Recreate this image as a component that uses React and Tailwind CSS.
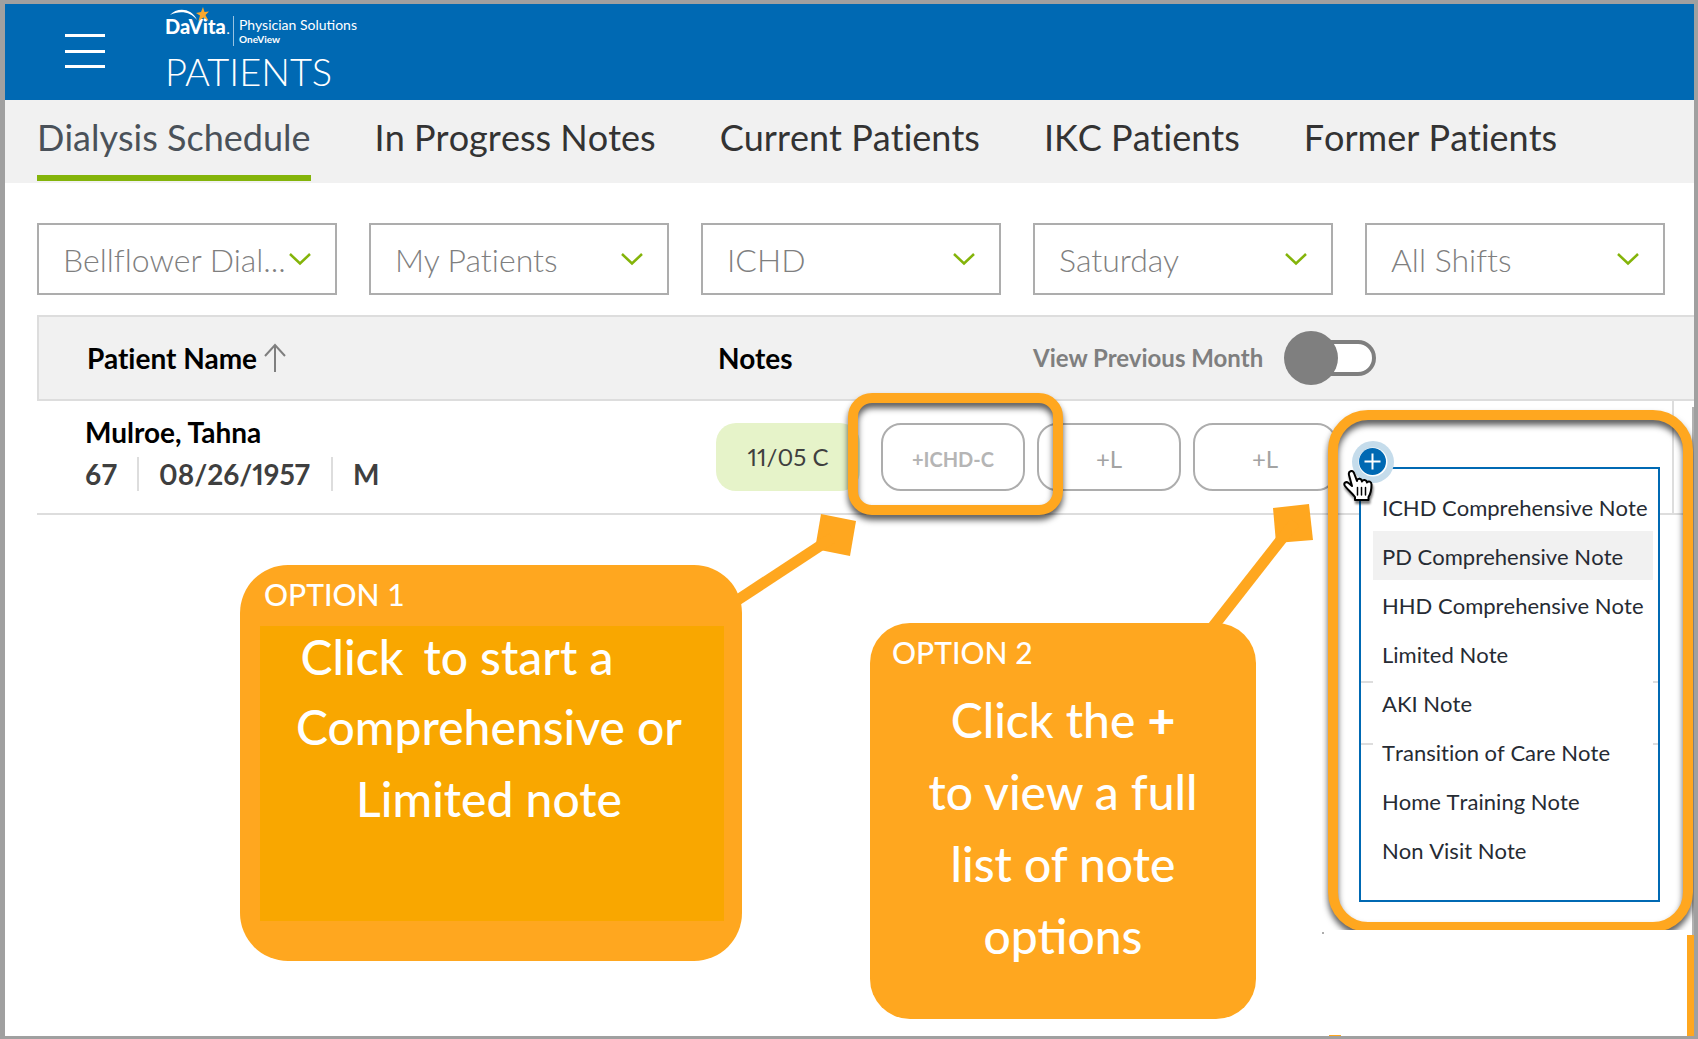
import React from 'react';

const tabs = ['Dialysis Schedule', 'In Progress Notes', 'Current Patients', 'IKC Patients', 'Former Patients'];

const filters = [
  { label: 'Clinic', value: 'Bellflower Dial...' },
  { label: 'Patient group', value: 'My Patients' },
  { label: 'Modality', value: 'ICHD' },
  { label: 'Day', value: 'Saturday' },
  { label: 'Shift', value: 'All Shifts' },
];

const noteTypes = [
  'ICHD Comprehensive Note',
  'PD Comprehensive Note',
  'HHD Comprehensive Note',
  'Limited Note',
  'AKI Note',
  'Transition of Care Note',
  'Home Training Note',
  'Non Visit Note',
];

function Logo() {
  return (
    <div className="flex h-12 text-white">
      <div className="relative flex w-[68px] pt-1.5">
        <span className="text-xl leading-8 font-black">DaVita</span>
        <span className="text-xl leading-8 font-light">.</span>
        <svg className="absolute top-0 left-0" width="68" height="28" viewBox="0 0 68 28" fill="none">
          <path d="M5 11C12 3 27 4 32 16C26 8 15 6 5 11Z" fill="#fff" />
          <path d="M38 3l1.500 5 4.500-.5-3.500 3.500 3 6-5-3.500-5 3.500 1.500-5.500-4-2.500 5-1z" fill="#f9a72b" />
        </svg>
      </div>
      <div className="mt-3 h-[30px] border-l border-white/60 pl-[5px]">
        <div className="text-sm leading-[18px] whitespace-nowrap">Physician Solutions</div>
        <div className="text-[10px] leading-[10px] font-bold">OneView</div>
      </div>
    </div>
  );
}

function Header() {
  return (
    <header className="flex h-24 bg-[#0069b3] text-white">
      <button aria-label="Menu" className="mt-[30px] ml-[60px] flex h-[34px] w-10 flex-col justify-between">
        <span className="h-[3px] w-full bg-white" />
        <span className="h-[3px] w-full bg-white" />
        <span className="h-[3px] w-full bg-white" />
      </button>
      <div className="ml-[60px]">
        <Logo />
        <h1 className="text-[38px] leading-[38px] font-light">PATIENTS</h1>
      </div>
    </header>
  );
}

function Tabs() {
  return (
    <nav className="flex gap-16 bg-[#f1f1f1] pb-0.5 pl-8 [font-kerning:none] [font-variant-ligatures:none]">
      {tabs.map((tab, i) => (
        <a
          key={tab}
          href="#"
          className={
            i === 0
              ? 'h-[81px] border-b-[6px] border-[#84b40a] pt-3 text-4xl leading-[50px] whitespace-nowrap text-[#4a5159]'
              : 'h-[81px] pt-3 text-4xl leading-[50px] whitespace-nowrap text-[#333]'
          }
        >
          {tab}
        </a>
      ))}
    </nav>
  );
}

function Filters() {
  return (
    <div className="flex gap-8 pt-10 pr-[29px] pb-5 pl-8">
      {filters.map((f) => (
        <label key={f.label} className="relative flex-1">
          <select
            aria-label={f.label}
            className="block h-[72px] w-full appearance-none border-2 border-[#adadad] bg-white pt-0.5 pl-6 text-[32px] font-light text-[#7f7f7f] [font-variant-ligatures:none]"
          >
            <option>{f.value}</option>
          </select>
          <svg
            className="pointer-events-none absolute top-[29px] right-[25px]"
            width="24"
            height="14"
            viewBox="0 0 24 14"
            fill="none"
            stroke="#84b40a"
            strokeWidth="2.5"
          >
            <path d="M2 2l10 9.500L22 2" />
          </svg>
        </label>
      ))}
    </div>
  );
}

function PatientTable() {
  return (
    <div className="pl-8 [font-variant-ligatures:none]">
      <table className="w-full table-fixed border-separate border-spacing-0 text-left text-[28px] text-black">
        <thead>
          <tr className="h-[86px] bg-[#f1f1f1]">
            <th className="w-[679px] border-y-2 border-l-2 border-[#ddd] pl-12 font-bold">
              <span className="flex items-center gap-[7px]">
                Patient Name
                <svg width="22" height="30" viewBox="0 0 22 30" fill="none" stroke="#7f7f7f" strokeWidth="2">
                  <path d="M11 29V2M1 13L11 2l10 11" />
                </svg>
              </span>
            </th>
            <th className="border-y-2 border-[#ddd] pl-0.5 font-bold">
              <div className="flex items-center">
                <span className="w-[315px]">Notes</span>
                <label htmlFor="previous" className="w-[257px] text-2xl whitespace-nowrap text-[#7f7f7f]">
                  View Previous Month
                </label>
                <input
                  id="previous"
                  type="checkbox"
                  role="switch"
                  className="relative h-9 w-[86px] appearance-none rounded-full border-4 border-[#7f7f7f] bg-white before:absolute before:-top-[13px] before:-left-2.5 before:size-[54px] before:rounded-full before:bg-[#7f7f7f]"
                />
              </div>
            </th>
            <th className="w-[22px] border-y-2 border-[#ddd]" />
          </tr>
        </thead>
        <tbody>
          <tr className="h-[114px]">
            <td className="border-b-2 border-[#ddd] pl-12 align-top font-bold">
              <div className="pt-2.5 leading-[42px]">Mulroe, Tahna</div>
              <div className="flex items-center leading-[42px] text-[#3f3f3f]">
                <span className="w-[52px]">67</span>
                <span className="flex h-[34px] w-[194px] items-center border-l-2 border-[#ddd] pl-5 [font-feature-settings:'pnum']">
                  08/26/1957
                </span>
                <span className="flex h-[34px] items-center border-l-2 border-[#ddd] pl-5">M</span>
              </div>
            </td>
            <td className="border-b-2 border-[#ddd] align-top">
              <div className="flex gap-3 pt-[22px]">
                <button className="mr-[9px] h-[68px] w-36 rounded-[20px] bg-[#e6f3c9] text-2xl text-[#3f3f3f] [font-feature-settings:'pnum'] [font-kerning:none]">
                  11/05 C
                </button>
                <button className="h-[68px] w-36 rounded-[20px] border-2 border-[#adadad] pt-1 text-xl font-bold text-[#b5b5b5]">
                  +ICHD-C
                </button>
                <button className="h-[68px] w-36 rounded-[20px] border-2 border-[#adadad] pt-1 text-2xl text-[#a3a3a3]">+L</button>
                <button className="h-[68px] w-36 rounded-[20px] border-2 border-[#adadad] pt-1 text-2xl text-[#a3a3a3]">+L</button>
              </div>
            </td>
            <td className="border-b-2 border-l-2 border-[#ddd]" />
          </tr>
        </tbody>
      </table>
    </div>
  );
}

function HandCursor() {
  return (
    <svg
      className="absolute top-[464px] left-[1336px] drop-shadow-[1px_3px_1px_rgba(0,0,0,0.5)]"
      width="34"
      height="36"
      viewBox="0 0 34 36"
      strokeLinejoin="round"
      strokeLinecap="round"
    >
      <path
        d="M14 32v-3C11 25 7 22 4 18c-2-3 1-5 3.500-3l3.500 3L8 7C7 3 11.500 1.500 13 5l3 8c0-3 4.500-3 5 .5 1-2.500 4.500-2 5 1 1.500-2 4.500-1 4.500 2 0 5 0 8-3 12.500V32z"
        fill="#fff"
        stroke="#000"
        strokeWidth="2"
      />
      <path d="M16.500 19.500v7.500M20.500 19.500v7.500M24.500 19.500v7.500" stroke="#000" strokeWidth="1.500" />
    </svg>
  );
}

function NoteMenu() {
  return (
    <>
      <div className="absolute top-[403px] left-[1687px] h-[528px] w-0.5 bg-[#b3b3b3]" />
      <div className="absolute top-[396px] left-[1317px] h-[530px] w-[372px] overflow-hidden">
        <div className="mt-2.5 ml-1.5 h-[522px] w-[365px] rounded-[40px] border-10 border-[#ffa71f] drop-shadow-[0_5px_3px_rgba(0,0,0,0.65)]" />
      </div>
      <ul className="absolute top-[463px] left-[1354px] h-[435px] w-[301px] border-2 border-[#0069b3] bg-white px-3 pt-[13px] [font-kerning:none] [font-variant-ligatures:none]">
        {noteTypes.map((note) => (
          <li key={note} className="w-[280px] nth-2:bg-[#f1f1f1]">
            <button className="block h-[49px] pt-px pl-[9px] text-left text-[22px] whitespace-nowrap text-[#262b33]">{note}</button>
          </li>
        ))}
      </ul>
      <div className="absolute top-[677px] left-[1356px] flex h-16 w-[297px] flex-col justify-between">
        <div className="flex justify-between">
          <span className="h-0.5 w-3 bg-[#ddd]" />
          <span className="h-0.5 w-[5px] bg-[#ddd]" />
        </div>
        <div className="flex justify-between">
          <span className="h-0.5 w-3 bg-[#ddd]" />
          <span className="h-0.5 w-[5px] bg-[#ddd]" />
        </div>
      </div>
      <button
        aria-label="Add note"
        className="absolute top-[437px] left-[1347px] flex size-[42px] items-center justify-center rounded-full bg-[#c5dceb]"
      >
        <svg width="30" height="30" viewBox="0 0 30 30">
          <circle cx="15" cy="15" r="14.500" fill="#fff" />
          <circle cx="14.500" cy="14.500" r="13.500" fill="#0069b3" />
          <path d="M14.500 6.500v16M6.500 14.500h16" stroke="#fff" strokeWidth="2" />
        </svg>
      </button>
      <HandCursor />
      <span className="absolute top-[928px] left-[1317px] size-0.5 bg-[#adadad]" />
      <div className="absolute top-[931px] left-[1682px] h-[101px] w-[7px] bg-[#ffa71f]" />
      <span className="absolute top-[1031px] left-[1324px] h-px w-3 bg-[#ffa71f]" />
    </>
  );
}

function Callouts() {
  return (
    <div className="font-medium text-white">
      <svg className="absolute top-[496px] left-[715px]" width="150" height="110" viewBox="0 0 150 110" fill="#ffa71f">
        <path d="M101 14l35 7-6 35-35-7z" />
        <path d="M112 38L10 105" stroke="#ffa71f" strokeWidth="11" />
      </svg>
      <section className="absolute top-[561px] left-[235px] h-[396px] w-[502px] rounded-[48px] bg-[#ffa71f] pt-[11px] pr-[18px] pl-5">
        <h2 className="pl-1 text-3xl leading-9 [font-variant-ligatures:none]">OPTION 1</h2>
        <div className="mt-3.5 h-[295px] bg-[#f9a700] pr-1.5 text-center text-5xl leading-[72px] [font-variant-ligatures:none]">
          <p className="flex justify-center gap-5 pr-16 leading-[62px]">
            <span>Click</span>
            <span>to start a</span>
          </p>
          <p className="pt-[3px]">Comprehensive or</p>
          <p>Limited note</p>
        </div>
      </section>

      <svg className="absolute top-[490px] left-[1195px]" width="125" height="140" viewBox="0 0 125 140" fill="#ffa71f">
        <path d="M73 14l36-4 4 36-37 3z" />
        <path d="M95 28L12 134" stroke="#ffa71f" strokeWidth="11" />
      </svg>
      <section className="absolute top-[619px] left-[865px] h-[396px] w-[386px] rounded-[40px] bg-[#ffa71f] pt-[11px]">
        <h2 className="pl-[22px] text-3xl leading-9 [font-variant-ligatures:none]">OPTION 2</h2>
        <p className="mt-3.5 text-center text-5xl leading-[72px]">
          Click the <b className="font-black">+</b>
          <br />
          to view a full
          <br />
          list of note
          <br />
          options
        </p>
      </section>
    </div>
  );
}

export default function App() {
  return (
    <div className="relative min-h-screen overflow-hidden border-t-4 border-r-4 border-b-[3px] border-l-[5px] border-[#a0a0a0] bg-white font-[Lato,sans-serif]">
      <Header />
      <Tabs />
      <Filters />
      <PatientTable />

      <Callouts />
      <div className="absolute top-[389px] left-[843px] h-[122px] w-[215px] rounded-3xl border-10 border-[#ffa71f] drop-shadow-[0_5px_3px_rgba(0,0,0,0.65)]" />
      <NoteMenu />
    </div>
  );
}
